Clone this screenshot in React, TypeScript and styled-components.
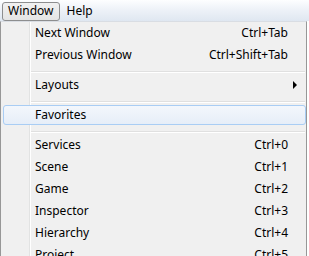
import React from "react";
import styled, { createGlobalStyle } from "styled-components";

const GlobalStyle = createGlobalStyle`
  html, body { margin: 0; padding: 0; background: #ffffff; }
  body { font-family: "Noto Sans", "DejaVu Sans", sans-serif; font-size: 12px; color: #000; overflow: hidden; }
`;

const Page = styled.div`
  width: 309px;
  height: 256px;
  overflow: hidden;
  display: flex;
  flex-direction: column;
`;

const MenuBar = styled.div`
  height: 21px;
  box-sizing: border-box;
  display: flex;
  align-items: flex-start;
  gap: 1px;
  padding: 2px 0 0 2px;
  background: linear-gradient(#fdfeff 0%, #eef2f8 45%, #dfe7f1 100%);
`;

const MenuTitle = styled.div<{ $active?: boolean }>`
  height: 19px;
  box-sizing: border-box;
  padding: 0 5px;
  line-height: 15px;
  border: 1px solid ${(p) => (p.$active ? "#8d8e8f" : "transparent")};
  border-radius: 3px;
  background: ${(p) => (p.$active ? "linear-gradient(#f1f1f1, #e4e4e4)" : "transparent")};
`;

const Dropdown = styled.div`
  width: 307px;
  box-sizing: border-box;
  border-left: 1px solid #979797;
  border-right: 1px solid #979797;
  border-top: 1px solid #d9dde3;
  background:
    linear-gradient(#e2e3e3, #e2e3e3) 28px 0 / 1px 100% no-repeat,
    linear-gradient(#ffffff, #ffffff) 29px 0 / 1px 100% no-repeat,
    #f0f0f0;
  flex: 1;
`;

const Item = styled.div<{ $highlighted?: boolean }>`
  box-sizing: border-box;
  display: grid;
  grid-template-columns: 1fr auto 9px;
  align-items: start;
  white-space: nowrap;
  line-height: 14px;
  height: ${(p) => (p.$highlighted ? "20px" : "22px")};
  margin: ${(p) => (p.$highlighted ? "1px 0 1px 2px" : "0")};
  padding: ${(p) => (p.$highlighted ? "2px 8px 0 31px" : "4px 9px 0 34px")};
  border: ${(p) => (p.$highlighted ? "1px solid #a9cdf4" : "none")};
  border-radius: 3px;
  background: ${(p) =>
    p.$highlighted ? "linear-gradient(#f3f7fc, #e6eef8)" : "transparent"};
`;

const Label = styled.span``;

const Shortcut = styled.span`
  text-align: right;
`;

const Arrow = styled.span`
  justify-self: end;
  margin-top: 3px;
  width: 0;
  height: 0;
  border-top: 4px solid transparent;
  border-bottom: 4px solid transparent;
  border-left: 4px solid #000;
`;

const Separator = styled.div`
  height: 8px;
  margin: 0 1px 0 30px;
  background:
    linear-gradient(#e0e0e0, #e0e0e0) 0 5px / 100% 1px no-repeat,
    linear-gradient(#ffffff, #ffffff) 0 6px / 100% 1px no-repeat;
`;

type Entry =
  | { kind: "sep" }
  | { kind: "item"; label: string; shortcut?: string; submenu?: boolean; highlighted?: boolean };

const entries: Entry[] = [
  { kind: "item", label: "Next Window", shortcut: "Ctrl+Tab" },
  { kind: "item", label: "Previous Window", shortcut: "Ctrl+Shift+Tab" },
  { kind: "sep" },
  { kind: "item", label: "Layouts", submenu: true },
  { kind: "sep" },
  { kind: "item", label: "Favorites", highlighted: true },
  { kind: "sep" },
  { kind: "item", label: "Services", shortcut: "Ctrl+0" },
  { kind: "item", label: "Scene", shortcut: "Ctrl+1" },
  { kind: "item", label: "Game", shortcut: "Ctrl+2" },
  { kind: "item", label: "Inspector", shortcut: "Ctrl+3" },
  { kind: "item", label: "Hierarchy", shortcut: "Ctrl+4" },
  { kind: "item", label: "Project", shortcut: "Ctrl+5" },
];

export default function App() {
  return (
    <Page>
      <GlobalStyle />
      <MenuBar>
        <MenuTitle $active>Window</MenuTitle>
        <MenuTitle>Help</MenuTitle>
      </MenuBar>
      <Dropdown>
        {entries.map((e, i) =>
          e.kind === "sep" ? (
            <Separator key={i} />
          ) : (
            <Item key={i} $highlighted={e.highlighted}>
              <Label>{e.label}</Label>
              <Shortcut>{e.shortcut ?? ""}</Shortcut>
              {e.submenu ? <Arrow /> : <span />}
            </Item>
          )
        )}
      </Dropdown>
    </Page>
  );
}
